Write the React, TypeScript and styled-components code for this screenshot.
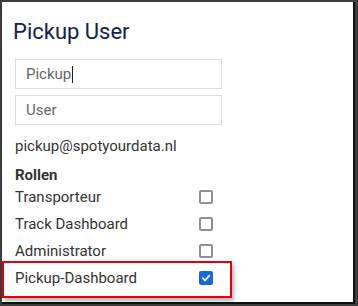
import React from "react";
import styled, { createGlobalStyle } from "styled-components";

const GlobalStyle = createGlobalStyle`
  html, body {
    margin: 0;
    padding: 0;
    background: #3c3c3c;
  }
  body {
    font-family: Roboto, "Liberation Sans", sans-serif;
  }
`;

const Modal = styled.div`
  box-sizing: border-box;
  margin: 2px 3px 0 2px;
  width: 353px;
  height: 302px;
  background: #fff;
  border-right: 2px solid #111;
  border-bottom: 2px solid #111;
  padding: 15px 0 0 11px;
`;

const Title = styled.h2`
  margin: 0 0 12px;
  font-size: 22px;
  font-weight: 400;
  line-height: 30px;
  color: #12214a;
`;

const Fields = styled.div`
  display: flex;
  flex-direction: column;
  gap: 6px;
  padding-left: 2px;
`;

const Field = styled.div`
  box-sizing: border-box;
  width: 207px;
  height: 30px;
  border: 1px solid #dcdcdc;
  padding: 0 10px;
  display: flex;
  align-items: center;
  font-size: 15px;
  color: #666;
`;

const Caret = styled.span`
  display: inline-block;
  width: 1px;
  height: 17px;
  margin-left: 1px;
  background: #222;
`;

const Email = styled.div`
  margin: 12px 0 0 2px;
  font-size: 15px;
  line-height: 18px;
  color: #333;
`;

const Heading = styled.div`
  margin: 11px 0 0 2px;
  font-size: 15px;
  font-weight: 700;
  line-height: 18px;
  color: #333;
`;

const Roles = styled.div`
  margin: 0 0 0 2px;
  display: flex;
  flex-direction: column;
`;

const Row = styled.label<{ $first?: boolean }>`
  position: relative;
  display: grid;
  grid-template-columns: 184px 14px;
  align-items: center;
  height: 27px;
  margin-top: ${({ $first }) => ($first ? "-1px" : "0")};
  font-size: 15px;
  color: #333;
`;

const Highlight = styled.span`
  position: absolute;
  left: -13px;
  top: -3px;
  width: 230px;
  height: 37px;
  box-sizing: border-box;
  border: 2px solid #e3000f;
  box-shadow: 2px 3px 4px rgba(0, 0, 0, 0.3);
  pointer-events: none;
`;

const Box = styled.span<{ $checked?: boolean }>`
  box-sizing: border-box;
  width: 14px;
  height: 14px;
  border-radius: 2px;
  border: ${({ $checked }) => ($checked ? "none" : "2px solid #8f8f9b")};
  background: ${({ $checked }) => ($checked ? "#1668dc" : "#fff")};
  display: flex;
  align-items: center;
  justify-content: center;
`;

const roles = [
  { name: "Transporteur", checked: false },
  { name: "Track Dashboard", checked: false },
  { name: "Administrator", checked: false },
  { name: "Pickup-Dashboard", checked: true },
];

const App = () => {
  return (
    <>
      <GlobalStyle />
      <Modal>
        <Title>Pickup User</Title>
        <Fields>
          <Field>
            Pickup
            <Caret />
          </Field>
          <Field>User</Field>
        </Fields>
        <Email>pickup@spotyourdata.nl</Email>
        <Heading>Rollen</Heading>
        <Roles>
          {roles.map((role, i) => (
            <Row key={role.name} $first={i === 0}>
              {role.checked && <Highlight />}
              <span>{role.name}</span>
              <Box $checked={role.checked}>
                {role.checked && (
                  <svg width="10" height="10" viewBox="0 0 10 10">
                    <path
                      d="M1.8 5.2 L4 7.3 L8.3 2.6"
                      fill="none"
                      stroke="#fff"
                      strokeWidth="1.8"
                      strokeLinecap="round"
                      strokeLinejoin="round"
                    />
                  </svg>
                )}
              </Box>
            </Row>
          ))}
        </Roles>
      </Modal>
    </>
  );
};

export default App;
